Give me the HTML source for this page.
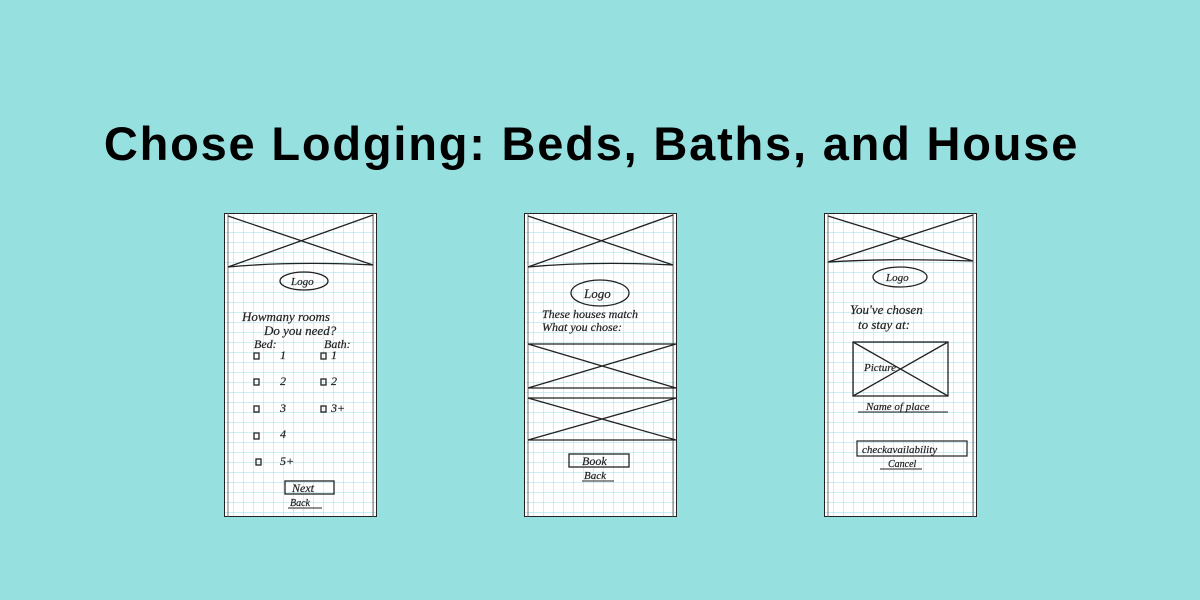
<!DOCTYPE html>
<html><head><meta charset="utf-8"><style>
body{margin:0;width:1200px;height:600px;background:#97e0e0;position:relative;overflow:hidden;font-family:"Liberation Sans",sans-serif}
h1{position:absolute;left:0;width:1183px;top:116px;margin:0;text-align:center;font-size:47px;font-weight:bold;color:#000;letter-spacing:1.8px}
svg{position:absolute;top:213px}
text{font-family:"Liberation Serif",serif;font-style:italic;fill:#222;stroke:#222;stroke-width:0.2}
</style></head><body>
<h1>Chose Lodging: Beds, Baths, and House</h1>
<svg width="0" height="0" style="position:absolute"><defs><pattern id="g" width="10" height="10" patternUnits="userSpaceOnUse"><rect width="10" height="10" fill="#fff"/><path d="M10 0V10M0 10H10" stroke="#9cdcec" stroke-width="1"/></pattern></defs></svg>

<svg style="left:224px" width="153" height="304" viewBox="0 0 153 304">
<rect x="0.5" y="0.5" width="152" height="303" fill="url(#g)" stroke="#222"/>
<path d="M4 0V304M149 0V304" stroke="#555" stroke-width="0.8"/>
<path d="M4 3L149 52M4 54L149 2M4 54Q70 48 149 52" stroke="#222" fill="none" stroke-width="1.3"/>
<ellipse cx="80" cy="68" rx="24" ry="9" fill="none" stroke="#222" stroke-width="1.3"/>
<text x="67" y="72" font-size="11">Logo</text>
<text x="18" y="108" font-size="13">Howmany rooms</text>
<text x="40" y="122" font-size="13">Do you need?</text>
<text x="30" y="135" font-size="12">Bed:</text><text x="100" y="135" font-size="12">Bath:</text>
<g fill="none" stroke="#222" stroke-width="1.3"><rect x="30" y="140" width="5" height="6"/><rect x="97" y="140" width="5" height="6"/><rect x="30" y="166" width="5" height="6"/><rect x="97" y="166" width="5" height="6"/><rect x="30" y="193" width="5" height="6"/><rect x="97" y="193" width="5" height="6"/><rect x="30" y="220" width="5" height="6"/><rect x="32" y="246" width="5" height="6"/></g>
<text x="56" y="146" font-size="12">1</text><text x="107" y="146" font-size="12">1</text>
<text x="56" y="172" font-size="12">2</text><text x="107" y="172" font-size="12">2</text>
<text x="56" y="199" font-size="12">3</text><text x="107" y="199" font-size="12">3+</text>
<text x="56" y="225" font-size="12">4</text><text x="56" y="252" font-size="12">5+</text>
<rect x="61" y="268" width="49" height="13" fill="none" stroke="#222" stroke-width="1.3"/>
<text x="68" y="279" font-size="12">Next</text>
<text x="66" y="293" font-size="10">Back</text><path d="M64 295H98" stroke="#222"/>
</svg>

<svg style="left:524px" width="153" height="304" viewBox="0 0 153 304">
<rect x="0.5" y="0.5" width="152" height="303" fill="url(#g)" stroke="#222"/>
<path d="M4 0V304M149 0V304" stroke="#555" stroke-width="0.8"/>
<path d="M4 3L149 52M4 54L149 2M4 54Q70 48 149 52" stroke="#222" fill="none" stroke-width="1.3"/>
<ellipse cx="76" cy="80" rx="29" ry="13" fill="none" stroke="#222" stroke-width="1.3"/>
<text x="60" y="85" font-size="13">Logo</text>
<text x="18" y="105" font-size="12">These houses match</text>
<text x="18" y="118" font-size="12">What you chose:</text>
<g stroke="#222" fill="none" stroke-width="1.3"><path d="M4 131H152M4 175H152M4 131L152 175M4 175L152 131"/><path d="M4 185H152M4 227H152M4 185L152 227M4 227L152 185"/></g>
<rect x="45" y="241" width="60" height="13" fill="none" stroke="#222" stroke-width="1.3"/>
<text x="58" y="252" font-size="12">Book</text>
<text x="60" y="266" font-size="11">Back</text><path d="M58 268H90" stroke="#222"/>
</svg>

<svg style="left:824px" width="153" height="304" viewBox="0 0 153 304">
<rect x="0.5" y="0.5" width="152" height="303" fill="url(#g)" stroke="#222"/>
<path d="M4 0V304M149 0V304" stroke="#555" stroke-width="0.8"/>
<path d="M4 3L149 48M4 49L149 2M4 49Q70 45 149 48" stroke="#222" fill="none" stroke-width="1.3"/>
<ellipse cx="76" cy="64" rx="27" ry="10" fill="none" stroke="#222" stroke-width="1.3"/>
<text x="62" y="68" font-size="11">Logo</text>
<text x="26" y="101" font-size="13">You've chosen</text>
<text x="34" y="116" font-size="13">to stay at:</text>
<rect x="29" y="129" width="95" height="54" fill="none" stroke="#222" stroke-width="1.3"/>
<path d="M29 129L124 183M29 183L124 129" stroke="#222" stroke-width="1.3"/>
<text x="40" y="158" font-size="11">Picture</text>
<text x="42" y="197" font-size="11">Name of place</text><path d="M34 199H124" stroke="#222"/>
<rect x="33" y="228" width="110" height="15" fill="none" stroke="#222" stroke-width="1.2"/>
<text x="38" y="240" font-size="11">checkavailability</text>
<text x="64" y="254" font-size="10">Cancel</text><path d="M56 256H98" stroke="#222"/>
</svg>
</body></html>
